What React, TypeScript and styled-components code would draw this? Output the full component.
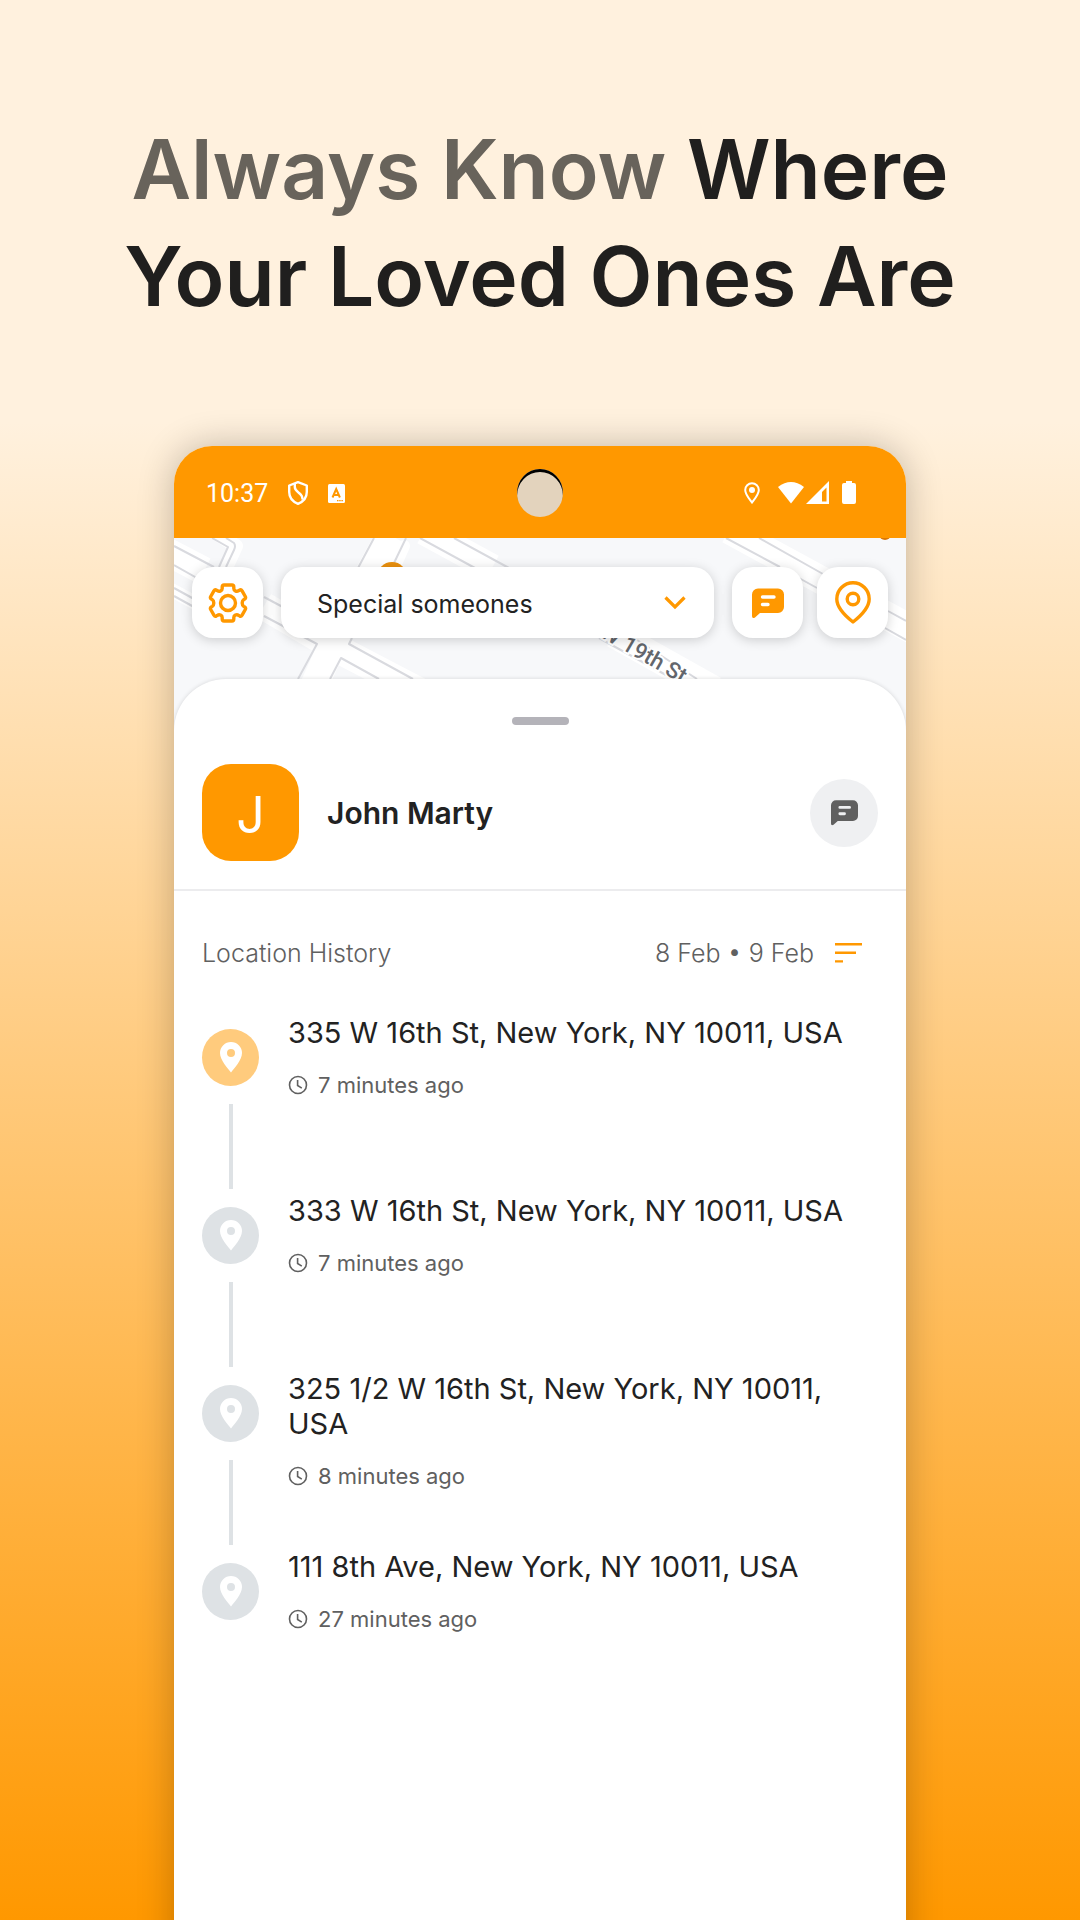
import React from "react";
import styled, { createGlobalStyle } from "styled-components";

const GlobalStyle = createGlobalStyle`
  *, *::before, *::after { box-sizing: border-box; }
  body { margin: 0; background: #ff9800; }
  #root { display: flex; min-height: 100vh; }
  button, select { font: inherit; color: inherit; }
`;

const orange = "#ff9800";

const Page = styled.main`
  flex: 1;
  min-width: 0;
  display: flex;
  flex-direction: column;
  align-items: center;
  overflow: hidden;
  padding-top: 116px;
  background: linear-gradient(180deg, #fff1de 0%, #fff1de 22%, #ff9800 100%);
  font-family: Inter, "Liberation Sans", sans-serif;
  color: #201f1e;
`;

const Headline = styled.h1`
  margin: 0 0 116px;
  font-size: 82px;
  line-height: 107px;
  font-weight: 600;
  text-align: center;
`;

const Muted = styled.span`
  color: #68635b;
`;

const Phone = styled.div`
  flex: 1;
  width: calc(100% - 348px);
  min-width: 640px;
  margin-bottom: -40px;
  display: flex;
  flex-direction: column;
  overflow: hidden;
  border-radius: 38px 38px 0 0;
  background: #fff;
  box-shadow: 0 0 36px rgba(0, 0, 0, 0.24);
`;

const StatusBar = styled.header`
  display: grid;
  grid-template-columns: 1fr auto 1fr;
  align-items: center;
  height: 92px;
  padding: 2px 50px 0 32px;
  background: ${orange};
  color: #fff;
  font-family: Roboto, sans-serif;
  font-size: 25px;
`;

const StatusGroup = styled.div<{ $end?: boolean; $gap: number }>`
  display: flex;
  align-items: center;
  justify-content: ${(p) => (p.$end ? "flex-end" : "flex-start")};
  gap: ${(p) => p.$gap}px;
  svg { display: block; }
`;

const Camera = styled.div`
  width: 46px;
  height: 48px;
  margin-left: 18px;
  border-radius: 50%;
  background: #e3d3bd;
  box-shadow: inset 0 3px 0 #000;
`;

const MapArea = styled.section`
  position: relative;
  height: 196px;
  background: #f7f8fa;
`;

const MapDrawing = styled.svg`
  position: absolute;
  inset: 0;
  width: 100%;
  height: 100%;
`;

const Toolbar = styled.div`
  position: relative;
  display: flex;
  gap: 18px;
  padding: 29px 18px 0;
`;

const ToolGroup = styled.div`
  display: flex;
  gap: 14px;
`;

const cardShadow = "0 2px 12px rgba(0, 0, 0, 0.18)";

const ToolButton = styled.button`
  display: grid;
  place-items: center;
  width: 71px;
  height: 71px;
  padding: 0;
  border: 0;
  border-radius: 21px;
  background: #fff;
  color: ${orange};
  box-shadow: ${cardShadow};
`;

const SelectBox = styled.label`
  flex: 1;
  display: flex;
  align-items: center;
  height: 71px;
  padding-right: 28px;
  border-radius: 21px;
  background: #fff;
  box-shadow: ${cardShadow};
  svg { display: block; flex: none; pointer-events: none; }
`;

const CircleSelect = styled.select`
  flex: 1;
  min-width: 0;
  height: 100%;
  padding: 2px 0 0 36px;
  border: 0;
  outline: 0;
  appearance: none;
  background: transparent;
  color: #222;
  font-size: 25px;
`;

const Sheet = styled.section`
  position: relative;
  flex: 1;
  margin-top: -55px;
  border-radius: 52px 52px 0 0;
  background: #fff;
  box-shadow: 0 0 4px rgba(0, 0, 0, 0.14);
`;

const Handle = styled.div`
  width: 57px;
  height: 8px;
  margin: 0 auto;
  border-radius: 4px;
  background: #b4b3b9;
`;

const HandleArea = styled.div`
  padding: 38px 0 39px;
`;

const Person = styled.div`
  display: flex;
  align-items: center;
  gap: 28px;
  padding: 0 28px 28px;
  border-bottom: 2px solid #ececee;
`;

const Avatar = styled.div`
  display: grid;
  place-items: center;
  width: 97px;
  height: 97px;
  border-radius: 29px;
  background: ${orange};
  color: #fff;
  font-size: 50px;
  line-height: 60px;
  padding-top: 4px;
`;

const Name = styled.h2`
  flex: 1;
  margin: 0;
  font-size: 30px;
  line-height: 40px;
  font-weight: 600;
  color: #222;
`;

const ChatButton = styled.button`
  display: grid;
  place-items: center;
  width: 68px;
  height: 68px;
  padding: 0;
  border: 0;
  border-radius: 50%;
  background: #eff0f2;
  color: #606060;
`;

const HistoryHead = styled.div`
  display: flex;
  align-items: center;
  padding: 46px 44px 0 28px;
  color: #606060;
  font-size: 25px;
  line-height: 32px;
`;

const HistoryTitle = styled.h3`
  flex: 1;
  margin: 0;
  font-size: inherit;
  font-weight: 300;
`;

const Range = styled.span`
  font-weight: 300;
`;

const SortButton = styled.button`
  display: grid;
  place-items: center;
  padding: 0;
  margin-left: 21px;
  border: 0;
  background: transparent;
  color: ${orange};
`;

const History = styled.ol`
  list-style: none;
  margin: 0;
  padding: 46px 28px 0;
`;

const Entry = styled.li`
  display: flex;
  gap: 29px;
  min-height: 178px;
`;

const Track = styled.div`
  display: flex;
  flex-direction: column;
  align-items: center;
  gap: 18px;
  padding-top: 14px;
`;

const Dot = styled.span<{ $active: boolean }>`
  display: grid;
  place-items: center;
  width: 57px;
  height: 57px;
  border-radius: 50%;
  background: ${(p) => (p.$active ? "#ffcb7d" : "#dee2e5")};
  color: #fff;
`;

const Connector = styled.span`
  width: 4px;
  height: 85px;
  background: #dee2e5;
`;

const Details = styled.div`
  flex: 1;
`;

const Address = styled.p`
  margin: 0 0 21px;
  color: #222;
  font-size: 29px;
  line-height: 35px;
`;

const When = styled.p`
  display: flex;
  align-items: center;
  gap: 10px;
  margin: 0;
  color: #606060;
  font-size: 22px;
  line-height: 28px;
`;

const ChatIcon = ({ size, bg }: { size: number; bg: string }) => (
  <svg width={size} height={size} viewBox="0 0 32 32" aria-hidden="true">
    <path d="M6 1.500h20a6 6 0 0 1 6 6v12.500a6 6 0 0 1-6 6H8L3 30.500Q0 32 0 29V7.500a6 6 0 0 1 6-6Z" fill="currentColor" />
    <path d="M10.500 10h11.500M10.500 17.500h5.500" stroke={bg} strokeWidth="3.400" strokeLinecap="round" />
  </svg>
);

const PinIcon = () => (
  <svg width="22" height="31" viewBox="0 0 22 31" aria-hidden="true">
    <path fillRule="evenodd" d="M11 0A11 11 0 0 1 22 11C22 18 14 26.500 11 30.500C8 26.500 0 18 0 11A11 11 0 0 1 11 0ZM11 7a4 4 0 1 0 0 8 4 4 0 0 0 0-8Z" fill="currentColor" />
  </svg>
);

const ClockIcon = () => (
  <svg width="20" height="20" viewBox="0 0 20 20" fill="none" stroke="currentColor" strokeWidth="1.600" aria-hidden="true">
    <circle cx="10" cy="10" r="8.500" />
    <path d="M9.600 5v5.500l4.200 2.600" />
  </svg>
);

const entries = [
  { address: "335 W 16th St, New York, NY 10011, USA", when: "7 minutes ago" },
  { address: "333 W 16th St, New York, NY 10011, USA", when: "7 minutes ago" },
  { address: "325 1/2 W 16th St, New York, NY 10011, USA", when: "8 minutes ago" },
  { address: "111 8th Ave, New York, NY 10011, USA", when: "27 minutes ago" },
];

const Streets = () => (
  <MapDrawing viewBox="0 0 732 196" preserveAspectRatio="xMidYMin slice" aria-hidden="true">
    <g fill="none" strokeLinejoin="round">
      <path d="M-10 48L40 75M40-6L62 8L50 34" stroke="#fff" strokeWidth="14" />
      <g stroke="#fff" strokeWidth="28">
        <path d="M-10 12L30 33" />
        <path d="M90 68L158 108L140 148M216-3L160 100M158 108L250 156" />
        <path d="M250-7L318 30" />
        <path d="M440 96L540 152" />
        <path d="M555-8L750 98" />
      </g>
      <path d="M230 8l-9 20" stroke="#fff" strokeWidth="12" strokeLinecap="round" />
      <g stroke="#d9dadf" strokeWidth="2">
        <path d="M0 8L40 29M0 27L30 44M38 0L54 9L45 29M52 0L60 5Q62 8 60 12L52 29M0 50L20 61M0 58L20 69" />
        <path d="M90 59L120 75M90 78L143 106L124 141" />
        <path d="M200 0L184 30M232 0L220 25M178 100L175 106L239 141M156 141L167 120L205 141" />
        <path d="M246 0L301 30M280 0L335 30" />
        <path d="M425 100L492 137M460 100L523 141" />
        <path d="M552 0L606 29M585 0L649 36M625 40L643 50M714 73L732 83M711 90L732 102" />
      </g>
    </g>
    <circle cx="218" cy="39" r="15" fill="#ea900e" />
    <circle cx="711" cy="-4" r="6" fill="#d97706" />
    <text
      transform="translate(425 98) rotate(30)"
      fontFamily="Roboto, sans-serif"
      fontSize="22"
      fontWeight="500"
      fill="#63666c"
      stroke="#fff"
      strokeWidth="4"
      paintOrder="stroke"
    >
      W 19th St
    </text>
  </MapDrawing>
);

export default function App() {
  return (
    <>
      <GlobalStyle />
      <Page>
        <Headline>
          <Muted>Always Know</Muted> Where
          <br />
          Your Loved Ones Are
        </Headline>
        <Phone>
          <StatusBar>
            <StatusGroup $gap={20}>
              <span>10:37</span>
              <svg width="20" height="24" viewBox="0 0 20 24" fill="none" stroke="#fff" strokeWidth="2.400" strokeLinejoin="round" aria-hidden="true">
                <path d="M10 1.200L18.800 4.500V11C18.800 17 14.500 21 10 22.800C5.500 21 1.200 17 1.200 11V4.500Z" />
                <path d="M6.800 2.500V6C6.800 12 15 11 14.500 18.500" />
              </svg>
              <svg width="17" height="19" viewBox="0 0 17 19" aria-hidden="true">
                <rect width="17" height="19" rx="1.500" fill="#fff" />
                <path d="M4.500 13.500L8.200 5L11.900 13.500M5.800 11h4.800" fill="none" stroke={orange} strokeWidth="2" />
                <path d="M9 16.700h6" stroke={orange} strokeWidth="1.300" strokeDasharray="1.500 0.700" />
              </svg>
            </StatusGroup>
            <Camera />
            <StatusGroup $end $gap={12}>
              <svg width="16" height="23" viewBox="0 0 16 23" aria-hidden="true">
                <path d="M8 1.200A6.800 6.800 0 0 1 14.800 8C14.800 12.500 10.500 17 8 20.500C5.500 17 1.200 12.500 1.200 8A6.800 6.800 0 0 1 8 1.200Z" fill="none" stroke="#fff" strokeWidth="2" />
                <circle cx="8" cy="8" r="3" fill="#fff" />
              </svg>
              <svg width="58" height="24" viewBox="0 0 58 24" aria-hidden="true">
                <path d="M6 6Q19-4 32 6L19 22.500Z" fill="#fff" />
                <path d="M34 23L57 0V23Z" fill="#fff" />
                <path d="M50 11L54.500 6.500V20.500H50Z" fill={orange} />
              </svg>
              <svg width="14" height="24" viewBox="0 0 14 24" aria-hidden="true">
                <path d="M4 0h6v2h2a2 2 0 0 1 2 2v17a2 2 0 0 1-2 2H2a2 2 0 0 1-2-2V4a2 2 0 0 1 2-2h2Z" fill="#fff" />
              </svg>
            </StatusGroup>
          </StatusBar>
          <MapArea>
            <Streets />
            <Toolbar>
              <ToolButton type="button" aria-label="Settings">
                <svg width="40" height="40" viewBox="0 0 40 40" fill="none" stroke="currentColor" strokeWidth="3.400" strokeLinejoin="round" aria-hidden="true">
                  <path d="M16 2h8q1.800 0 1.800 2v1.500q0 1.600 1.600 2.400t3-.1l1.200-.7q1.500-.8 2.500.8l3.200 5.600q.8 1.600-.6 2.500l-1 .6q-1.500 1-1.500 3.400t1.500 3.400l1 .6q1.400.9.6 2.500l-3.200 5.600q-1 1.600-2.500.8l-1.200-.7q-1.400-.9-3-.1t-1.600 2.400V36q0 2-1.800 2h-8q-1.800 0-1.800-2v-1.500q0-1.600-1.600-2.400t-3 .1l-1.200.7q-1.500.8-2.500-.8l-3.200-5.600q-.8-1.600.6-2.500l1-.6q1.500-1 1.500-3.400t-1.500-3.400l-1-.6q-1.400-.9-.6-2.500l3.200-5.600q1-1.600 2.500-.8l1.200.7q1.400.9 3 .1t1.600-2.400V4q0-2 1.800-2Z" />
                  <circle cx="20" cy="20" r="7.500" />
                </svg>
              </ToolButton>
              <SelectBox>
                <CircleSelect aria-label="Circle" defaultValue="special">
                  <option value="special">Special someones</option>
                </CircleSelect>
                <svg width="22" height="14" viewBox="0 0 22 14" fill="none" stroke={orange} strokeWidth="3.200" aria-hidden="true">
                  <path d="M1.500 1.500L11 11L20.500 1.500" />
                </svg>
              </SelectBox>
              <ToolGroup>
                <ToolButton type="button" aria-label="Messages">
                  <ChatIcon size={32} bg="#fff" />
                </ToolButton>
                <ToolButton type="button" aria-label="Places">
                  <svg width="36" height="43" viewBox="0 0 36 43" fill="none" stroke="currentColor" strokeWidth="3.400" strokeLinejoin="round" aria-hidden="true">
                    <path d="M18 1.800A16.200 16.200 0 0 1 34.200 18C34.200 27.500 25 35.500 18 41C11 35.500 1.800 27.500 1.800 18A16.200 16.200 0 0 1 18 1.800Z" />
                    <circle cx="18" cy="18" r="5.800" />
                  </svg>
                </ToolButton>
              </ToolGroup>
            </Toolbar>
          </MapArea>
          <Sheet>
            <HandleArea>
              <Handle />
            </HandleArea>
            <Person>
              <Avatar>J</Avatar>
              <Name>John Marty</Name>
              <ChatButton type="button" aria-label="Message John Marty">
                <ChatIcon size={27} bg="#eff0f2" />
              </ChatButton>
            </Person>
            <HistoryHead>
              <HistoryTitle>Location History</HistoryTitle>
              <Range>8 Feb • 9 Feb</Range>
              <SortButton type="button" aria-label="Filter history">
                <svg width="27" height="20" viewBox="0 0 27 20" stroke="currentColor" strokeWidth="2.400" aria-hidden="true">
                  <path d="M0 1.200h27M0 9.800h21M0 18.400h8" />
                </svg>
              </SortButton>
            </HistoryHead>
            <History>
              {entries.map((entry, i) => (
                <Entry key={entry.address}>
                  <Track>
                    <Dot $active={i === 0}>
                      <PinIcon />
                    </Dot>
                    {i < entries.length - 1 && <Connector />}
                  </Track>
                  <Details>
                    <Address>{entry.address}</Address>
                    <When>
                      <ClockIcon />
                      {entry.when}
                    </When>
                  </Details>
                </Entry>
              ))}
            </History>
          </Sheet>
        </Phone>
      </Page>
    </>
  );
}
